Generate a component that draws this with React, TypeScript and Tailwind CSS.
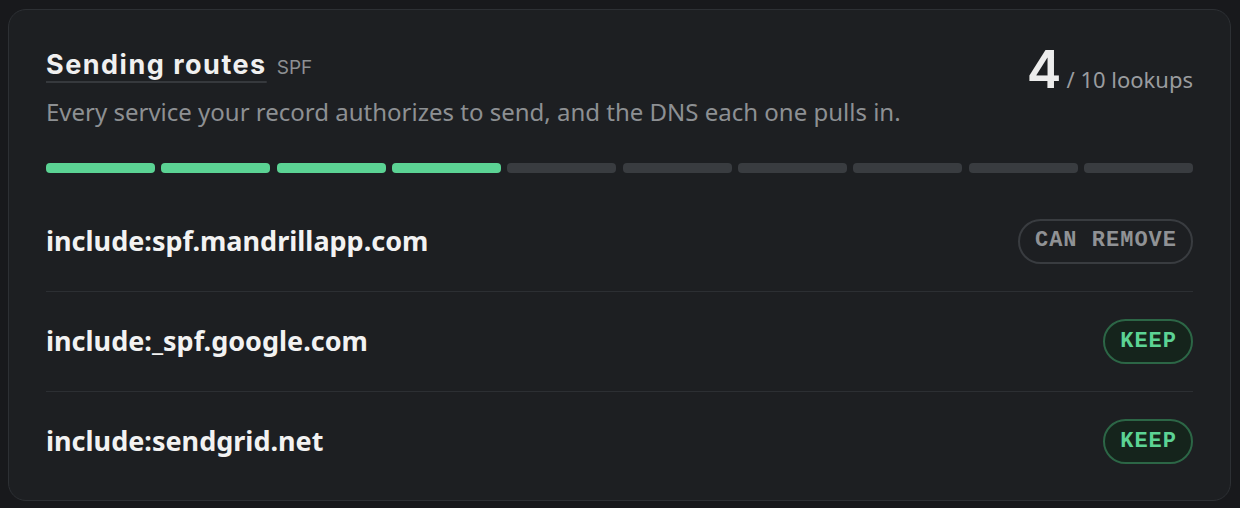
const SEGMENTS = 10;
const USED = 4;

type Route = { name: string; keep: boolean };

const routes: Route[] = [
  { name: "include:spf.mandrillapp.com", keep: false },
  { name: "include:_spf.google.com", keep: true },
  { name: "include:sendgrid.net", keep: true },
];

function Badge({ keep }: { keep: boolean }) {
  return (
    <span
      className={`h-[45px] flex items-center rounded-full border-2 px-[15px] font-['Liberation_Mono',monospace] font-bold text-[22px] tracking-[1px] leading-none ${
        keep
          ? "border-[#2c6646] bg-[#15241c] text-[#5cd394]"
          : "border-[#393c40] text-[#909295]"
      }`}
    >
      <span className="-mr-[1px]">{keep ? "KEEP" : "CAN REMOVE"}</span>
    </span>
  );
}

export default function App() {
  return (
    <div className="w-[1240px] h-[508px] bg-[#18191c] p-[8px] pt-[9px]">
      <div className="w-[1223px] h-[492px] rounded-[18px] border border-[#2d3034] bg-[#1d1f22] px-[37px] pt-[41px]">
        <div className="flex items-start justify-between">
          <div>
            <h2 className="flex items-baseline gap-[10px] leading-none">
              <span className="font-['Inter',sans-serif] font-bold text-[27px] tracking-[1.5px] text-[#f0f0f0] underline decoration-[#36393d] decoration-2 underline-offset-[7px]">
                Sending routes
              </span>
              <span className="font-['Inter',sans-serif] text-[19px] text-[#8d9093]">
                SPF
              </span>
            </h2>
            <p className="mt-[18px] font-['Noto_Sans',sans-serif] text-[24px] leading-[32px] text-[#8d9093]">
              Every service your record authorizes to send, and the DNS each
              one pulls in.
            </p>
          </div>
          <div className="-mt-[7px] flex items-baseline gap-[5px] leading-none">
            <span className="font-['Inter',sans-serif] font-semibold text-[52px] text-[#ececec]">
              {USED}
            </span>
            <span className="font-['Noto_Sans',sans-serif] text-[22px] text-[#9a9c9f]">
              / {SEGMENTS} lookups
            </span>
          </div>
        </div>

        <div className="mt-[35px] flex gap-[6.5px]">
          {Array.from({ length: SEGMENTS }).map((_, i) => (
            <div
              key={i}
              className={`h-[10px] flex-1 rounded-[4px] ${
                i < USED ? "bg-[#5bd394]" : "bg-[#393c40]"
              }`}
            />
          ))}
        </div>

        <div className="mt-[18px]">
          {routes.map((r, i) => (
            <div
              key={r.name}
              className={`h-[100px] flex items-center justify-between ${
                i > 0 ? "border-t border-[#2c2f33]" : ""
              }`}
            >
              <span className="font-['Noto_Sans',sans-serif] font-bold text-[27px] text-[#f2f2f2]">
                {r.name}
              </span>
              <Badge keep={r.keep} />
            </div>
          ))}
        </div>
      </div>
    </div>
  );
}
